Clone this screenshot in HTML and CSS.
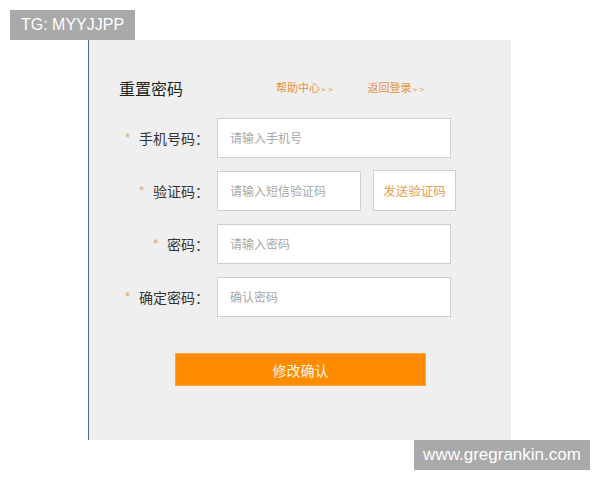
FILE: index.html
```html
<!DOCTYPE html>
<html lang="zh-CN">
<head>
<meta charset="utf-8">
<title>重置密码</title>
<link rel="stylesheet" href="styles.css">
</head>
<body>
<div class="wm wm-top">TG: MYYJJPP</div>
<div class="panel">
  <div class="header">
    <h1 class="title">重置密码</h1>
    <a class="link link-help" href="#">帮助中心<span class="gt">&gt; &gt;</span></a>
    <a class="link link-back" href="#">返回登录<span class="gt">&gt; &gt;</span></a>
  </div>
  <form class="form">
    <div class="row">
      <label class="label"><span class="star">*</span>手机号码：</label>
      <input class="field" type="text" placeholder="请输入手机号">
    </div>
    <div class="row">
      <label class="label"><span class="star">*</span>验证码：</label>
      <input class="field field-short" type="text" placeholder="请输入短信验证码">
      <button class="send" type="button">发送验证码</button>
    </div>
    <div class="row">
      <label class="label"><span class="star">*</span>密码：</label>
      <input class="field" type="password" placeholder="请输入密码">
    </div>
    <div class="row">
      <label class="label"><span class="star">*</span>确定密码：</label>
      <input class="field" type="password" placeholder="确认密码">
    </div>
    <button class="submit" type="button">修改确认</button>
  </form>
</div>
<div class="wm wm-bottom">www.gregrankin.com</div>
</body>
</html>
```
FILE: styles.css
```css
* { box-sizing: border-box; }
html, body { margin: 0; padding: 0; background: #fff; }
body {
  font-family: "Noto Sans CJK SC", "Liberation Sans", sans-serif;
  color: #333;
  width: 600px;
  height: 480px;
  position: relative;
  overflow: hidden;
}
.wm {
  position: absolute;
  background: #a9a9a9;
  color: #fff;
  font-family: "Liberation Sans", Arial, sans-serif;
  height: 30px;
  line-height: 30px;
}
.wm-top { left: 10px; top: 10px; width: 125px; padding-left: 11px; font-size: 16px; }
.wm-bottom { left: 414px; top: 440px; width: 176px; text-align: center; font-size: 17px; }

.panel {
  margin: 40px 0 0 88px;
  width: 423px;
  height: 400px;
  background: #efefef;
  border-left: 1px solid #4f6f86;
}
.header {
  display: flex;
  align-items: center;
  height: 24px;
  padding-top: 36px;
  box-sizing: content-box;
  padding-left: 30px;
}
.title {
  margin: 0;
  font-size: 16px;
  font-weight: normal;
  color: #1e1e1e;
  line-height: 24px;
}
.link {
  font-size: 11px;
  color: #e8923a;
  text-decoration: none;
  line-height: 16px;
}
.gt { font-family: "Liberation Sans", sans-serif; font-size: 8px; margin-left: 1px; }
.link-help { margin-left: 93px; }
.link-back { margin-left: 35px; }

.form {
  display: flex;
  flex-direction: column;
  margin-top: 17px;
}
.row {
  display: flex;
  align-items: center;
  height: 41px;
  margin-bottom: 12px;
}
.label {
  width: 120px;
  text-align: right;
  font-size: 14px;
  color: #333;
  margin-right: 8px;
}
.star {
  font-family: "Liberation Sans", sans-serif;
  color: #e8a468;
  font-size: 13px;
  margin-right: 9px;
  position: relative;
  top: -2px;
}
.field {
  width: 234px;
  height: 40px;
  border: 1px solid #cfcfcf;
  background: #fff;
  padding: 0 12px;
  font-family: "Noto Sans CJK SC", sans-serif;
  font-size: 12px;
  color: #333;
  outline: none;
  margin: 0;
}
.field::placeholder { color: #a8a8a8; }
.field-short { width: 144px; }
.send {
  margin: 0 0 0 12px;
  width: 83px;
  height: 41px;
  background: #fff;
  border: 1px solid #cfcfcf;
  color: #e8a050;
  font-family: "Noto Sans CJK SC", sans-serif;
  font-size: 12.5px;
  padding: 0;
}
.submit {
  margin: 24px 0 0 86px;
  width: 251px;
  height: 33px;
  background: #ff8c00;
  border: 1px solid #ffa52e;
  color: #fff7e6;
  font-family: "Noto Sans CJK SC", sans-serif;
  font-size: 14px;
  padding: 0;
}
```
